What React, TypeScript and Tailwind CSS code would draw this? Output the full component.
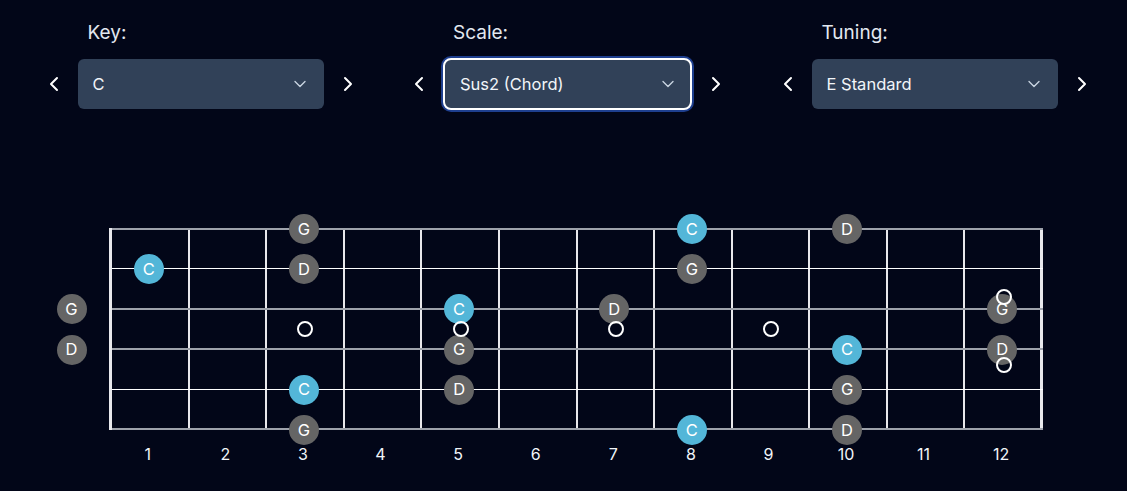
import React from 'react';
import { ChevronDown, ChevronLeft, ChevronRight } from 'lucide-react';

type Note = { string: number; fret: number; name: string };

const FRET_W = 931 / 12;
const STRING_GAP = 201 / 5;

// top string is high e, fret 0 = open string (drawn left of the nut)
const notes: Note[] = [
	{ string: 0, fret: 3, name: 'G' },
	{ string: 0, fret: 8, name: 'C' },
	{ string: 0, fret: 10, name: 'D' },
	{ string: 1, fret: 1, name: 'C' },
	{ string: 1, fret: 3, name: 'D' },
	{ string: 1, fret: 8, name: 'G' },
	{ string: 2, fret: 0, name: 'G' },
	{ string: 2, fret: 5, name: 'C' },
	{ string: 2, fret: 7, name: 'D' },
	{ string: 2, fret: 12, name: 'G' },
	{ string: 3, fret: 0, name: 'D' },
	{ string: 3, fret: 5, name: 'G' },
	{ string: 3, fret: 10, name: 'C' },
	{ string: 3, fret: 12, name: 'D' },
	{ string: 4, fret: 3, name: 'C' },
	{ string: 4, fret: 5, name: 'D' },
	{ string: 4, fret: 10, name: 'G' },
	{ string: 5, fret: 3, name: 'G' },
	{ string: 5, fret: 8, name: 'C' },
	{ string: 5, fret: 10, name: 'D' },
];

const inlays = [
	{ fret: 3, y: 100 },
	{ fret: 5, y: 100 },
	{ fret: 7, y: 100 },
	{ fret: 9, y: 100 },
	{ fret: 12, y: 68 },
	{ fret: 12, y: 136 },
];

const strings = [
	'h-[2px] bg-[#9ea2ab]',
	'h-px bg-white',
	'h-[2px] bg-[#9ea2ab]',
	'h-[2px] bg-[#9ea2ab]',
	'h-px bg-white',
	'h-[2px] bg-[#9ea2ab]',
];

function Picker({ label, value, focused }: { label: string; value: string; focused?: boolean }) {
	return (
		<div className="w-[367px] flex items-end justify-center gap-3">
			<button className="w-6 h-[50px] flex items-center justify-center text-white">
				<ChevronLeft size={24} strokeWidth={2} />
			</button>
			<div className="flex flex-col">
				<span className="pl-[10px] mb-[12px] text-[19px] leading-7 text-slate-200">{label}</span>
				<div
					className={
						focused
							? 'w-[249px] h-[52px] -my-px rounded-lg bg-slate-700 border-2 border-white ring-2 ring-[#1e3f8f] pl-[15px] pr-[12px] flex items-center justify-between'
							: 'w-[246px] h-[50px] rounded-md bg-slate-700 pl-[15px] pr-[14px] flex items-center justify-between'
					}
				>
					<span className="text-[16.5px] text-slate-100">{value}</span>
					<ChevronDown size={20} strokeWidth={1.6} className="text-slate-300" />
				</div>
			</div>
			<button className="w-6 h-[50px] flex items-center justify-center text-white">
				<ChevronRight size={24} strokeWidth={2} />
			</button>
		</div>
	);
}

export default function App() {
	return (
		<div className="min-h-screen w-full bg-slate-950 font-['Inter','Liberation_Sans',sans-serif] text-white">
			<div className="flex pl-[17px] pt-[19px]">
				<Picker label="Key:" value="C" />
				<Picker label="Scale:" value="Sus2 (Chord)" focused />
				<Picker label="Tuning:" value="E Standard" />
			</div>

			<div className="ml-[109px] mt-[119px] w-[934px]">
				<div className="relative h-[202px] border-l-[3px] border-l-[#e8e8ec]">
					<div className="grid grid-cols-12 h-full">
						{Array.from({ length: 12 }, (_, i) => (
							<div key={i} className={i === 11 ? 'border-r-[3px] border-[#e8e8ec]' : 'border-r-2 border-[#e8e8ec]'} />
						))}
					</div>
					<div className="absolute inset-0 flex flex-col justify-between">
						{strings.map((cls, i) => (
							<div key={i} className={cls} />
						))}
					</div>

					{notes.map((n, i) => (
						<div
							key={i}
							className={
								'absolute w-[30px] h-[30px] -translate-x-1/2 -translate-y-1/2 rounded-full flex items-center justify-center text-[16.5px] text-white ' +
								(n.name === 'C' ? 'bg-[#53b6d8]' : 'bg-[#656565]')
							}
							style={{
								left: n.fret === 0 ? -40.5 : (n.fret - 0.5) * FRET_W - 2,
								top: n.string * STRING_GAP + 1,
							}}
						>
							{n.name}
						</div>
					))}

					{inlays.map((m, i) => (
						<div
							key={i}
							className="absolute w-4 h-4 -translate-x-1/2 -translate-y-1/2 rounded-full border-2 border-white"
							style={{ left: (m.fret - 0.5) * FRET_W - 0.5, top: m.y + 1 }}
						/>
					))}
				</div>

				<div className="grid grid-cols-12 mt-[12px] pr-[3px]">
					{Array.from({ length: 12 }, (_, i) => (
						<span key={i} className="text-center text-base leading-6 text-slate-100">
							{i + 1}
						</span>
					))}
				</div>
			</div>
		</div>
	);
}
